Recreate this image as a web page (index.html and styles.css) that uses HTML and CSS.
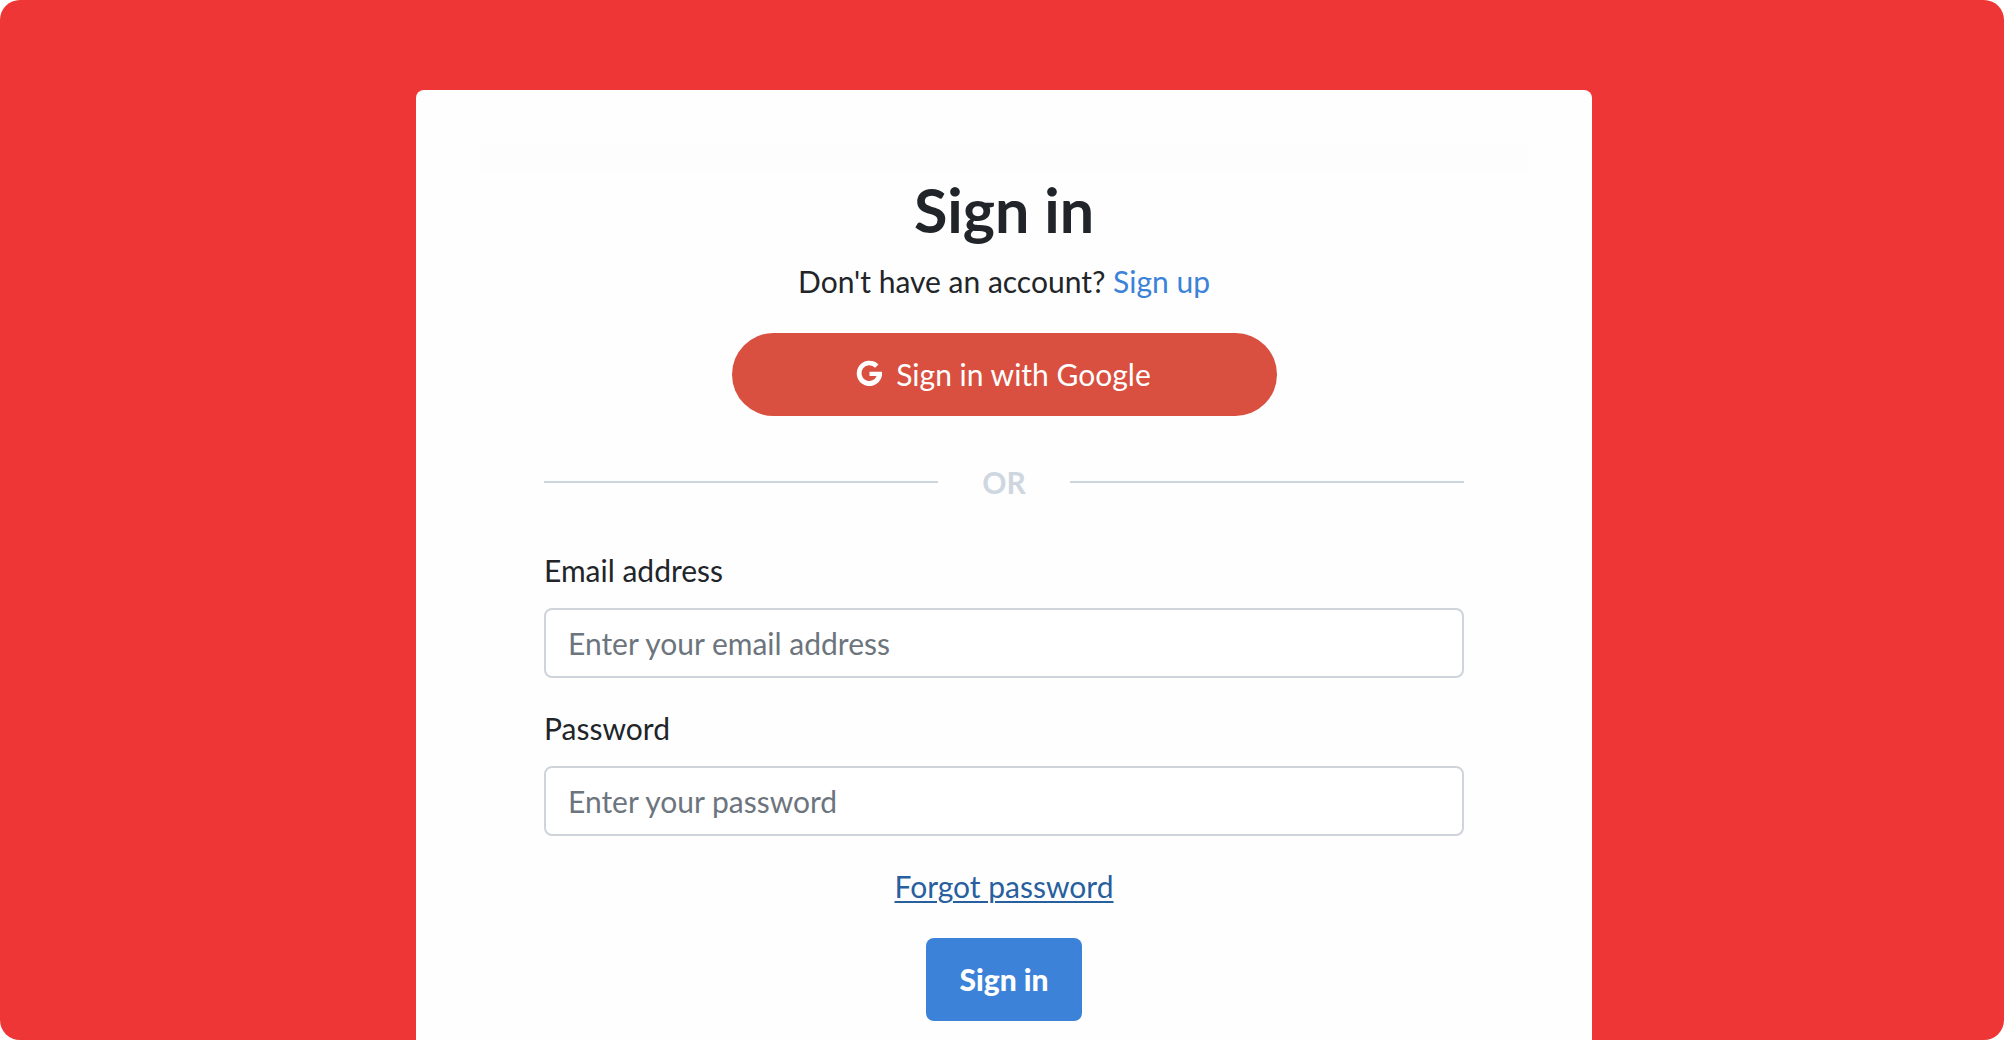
FILE: index.html
```html
<!DOCTYPE html>
<html lang="en">
<head>
<meta charset="utf-8">
<meta name="viewport" content="width=device-width, initial-scale=1">
<title>Sign in</title>
<link rel="stylesheet" href="styles.css">
</head>
<body>
<main class="page">
  <section class="card">
    <div class="notice"></div>
    <h1 class="title">Sign in</h1>
    <p class="signup">Don't have an account? <a class="signup-link" href="#">Sign up</a></p>
    <button class="google" type="button">
      <svg class="google-icon" viewBox="0 0 24 24" aria-hidden="true"><path d="M20.6 3.3A12.2 12.2 0 1 0 24 10.2H12V14.4H18.9A7.6 7.6 0 1 1 17.4 6.4Z" fill="currentColor"/></svg>
      <span>Sign in with Google</span>
    </button>
    <form class="form">
      <div class="divider">OR</div>
      <div class="field">
        <label class="label" for="email">Email address</label>
        <input class="input" id="email" type="email" placeholder="Enter your email address">
      </div>
      <div class="field">
        <label class="label" for="password">Password</label>
        <input class="input" id="password" type="password" placeholder="Enter your password">
      </div>
      <a class="forgot" href="#">Forgot password</a>
      <button class="submit" type="submit">Sign in</button>
    </form>
  </section>
</main>
</body>
</html>
```
FILE: styles.css
```css
* {
  box-sizing: border-box;
}

body {
  margin: 0;
  background: #fff;
  color: #212529;
  font-family: Lato, "Liberation Sans", sans-serif;
  font-size: 30px;
  line-height: 44px;
}

.page {
  display: flex;
  flex-direction: column;
  align-items: center;
  min-height: 100vh;
  padding: 90px 20px 0 24px;
  background: #ef3636;
  border-radius: 20px;
}

.card {
  display: flex;
  flex: 1;
  flex-direction: column;
  align-items: center;
  width: 100%;
  max-width: 1176px;
  padding: 53px 64px 16px;
  background: #fefefe;
  border-radius: 8px 8px 0 0;
}

.notice {
  width: 100%;
  height: 30px;
  background: #fdfdfd;
}

.title {
  margin: 0 0 12px;
  font-size: 61px;
  font-weight: 700;
  line-height: 74px;
}

.signup {
  margin: 0 0 30px;
}

.signup-link {
  color: #3b82d8;
  text-decoration: none;
}

.google {
  display: flex;
  align-items: center;
  justify-content: center;
  gap: 14px;
  width: 100%;
  max-width: 545px;
  height: 83px;
  padding: 0 24px 2px;
  border: 0;
  border-radius: 42px;
  background: #d95040;
  color: #fff;
  font: inherit;
}

.google-icon {
  width: 25px;
  height: 25px;
  overflow: visible;
}

.form {
  display: flex;
  flex-direction: column;
  align-items: center;
  width: 100%;
  padding: 0 64px;
}

.divider {
  display: flex;
  align-items: center;
  gap: 44px;
  width: 100%;
  margin: 44px 0;
  color: #ced6e0;
  font-weight: 700;
}

.divider::before,
.divider::after {
  flex: 1;
  height: 2px;
  background: #ced6dd;
  content: "";
}

.field {
  display: flex;
  flex-direction: column;
  gap: 16px;
  width: 100%;
  margin-bottom: 28px;
}

.input {
  width: 100%;
  height: 70px;
  padding: 0 22px;
  border: 2px solid #ced4da;
  border-radius: 8px;
  background: #fff;
  color: #212529;
  font: inherit;
}

.input::placeholder {
  color: #6c757d;
  opacity: 1;
}

.forgot {
  margin-bottom: 30px;
  color: #285f9f;
  text-decoration: underline;
  text-decoration-thickness: 2px;
  text-underline-offset: 3px;
}

.submit {
  height: 83px;
  padding: 0 33px 2px;
  border: 0;
  border-radius: 8px;
  background: #3b82d8;
  color: #fff;
  font: inherit;
  font-weight: 900;
}
```
